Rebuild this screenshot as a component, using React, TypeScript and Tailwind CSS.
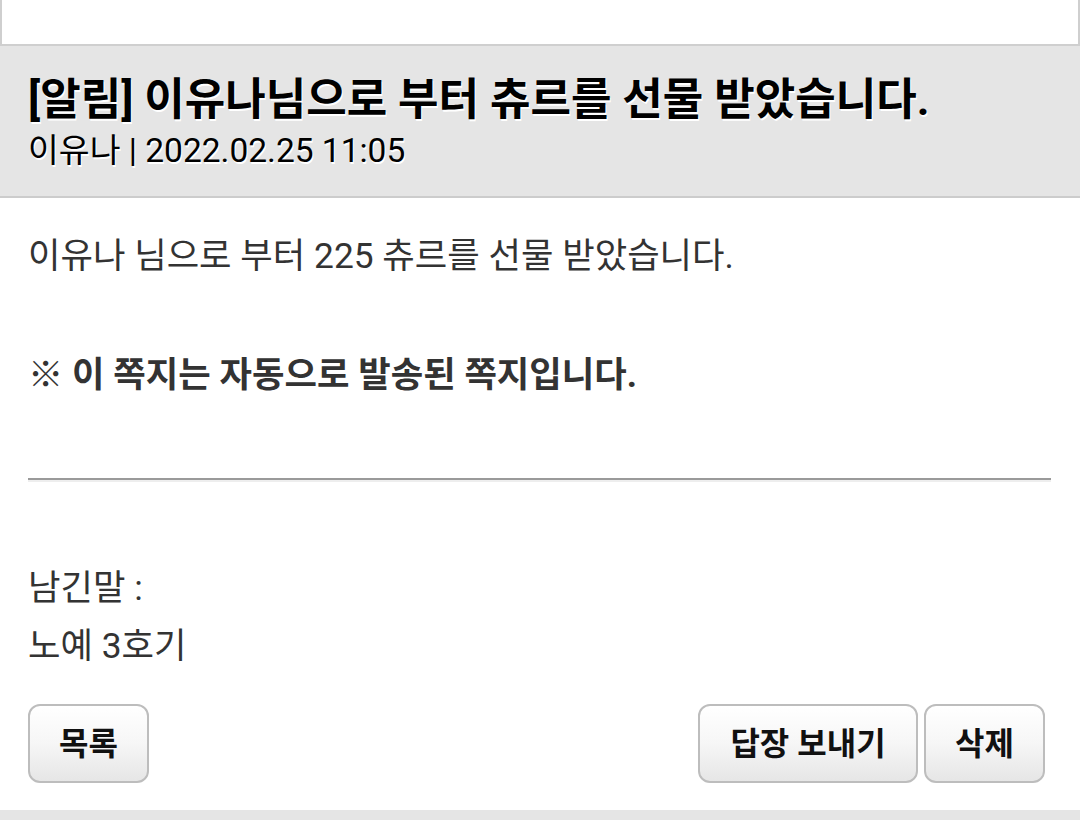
const FONT = "font-['Roboto','Noto_Sans_CJK_KR',sans-serif]";

function Button({ label, width }: { label: string; width: string }) {
  return (
    <button
      className={`${width} h-[79px] rounded-[12px] border-2 border-[#bdbdbd] bg-gradient-to-b from-[#ffffff] via-[#f6f6f6] to-[#e6e6e6] text-[32px] font-bold text-[#111] shadow-[inset_0_1px_0_#fff]`}
    >
      {label}
    </button>
  );
}

export default function App() {
  return (
    <div className={`${FONT} w-[1080px] h-[820px] bg-white overflow-hidden flex flex-col`}>
      {/* top box (cut off) */}
      <div className="h-[46px] shrink-0 border-x-2 border-b-2 border-[#cfcfcf] bg-white" />

      {/* message header */}
      <div className="shrink-0 bg-[#e5e5e5] border-b-2 border-[#cccccc] px-[28px] pt-[30px] pb-[25px] text-black [text-shadow:1px_2px_0_#ffffff]">
        <h1 className="text-[44px] leading-[48px] font-bold">[알림] 이유나님으로 부터 츄르를 선물 받았습니다.</h1>
        <p className="mt-[7px] text-[33.5px] leading-[40px]">이유나 | 2022.02.25 11:05</p>
      </div>

      {/* body */}
      <div className="flex-1 px-[28px] pr-[29px] text-[#333] text-[35.3px]">
        <p className="mt-[38px] h-[40px] leading-[40px]">이유나 님으로 부터 225 츄르를 선물 받았습니다.</p>
        <p className="mt-[76px] h-[40px] leading-[40px] font-bold">
          <span className="font-['Noto_Sans_CJK_KR',sans-serif] font-black">※</span> 이 쪽지는 자동으로 발송된 쪽지입니다.
        </p>
        <hr className="mt-[86px] border-0 border-t-2 border-t-[#9a9a9a] border-b-2 border-b-[#eeeeee] h-0" />
        <p className="mt-[86px] h-[40px] leading-[40px]">남긴말 :</p>
        <p className="mt-[18px] h-[40px] leading-[40px]">노예 3호기</p>

        <div className="mt-[38px] flex items-center">
          <Button label="목록" width="w-[121px]" />
          <div className="ml-auto flex gap-[6px] mr-[6px]">
            <Button label="답장 보내기" width="w-[220px]" />
            <Button label="삭제" width="w-[121px]" />
          </div>
        </div>
      </div>

      <div className="h-[10px] shrink-0 bg-[#e5e5e5]" />
    </div>
  );
}
